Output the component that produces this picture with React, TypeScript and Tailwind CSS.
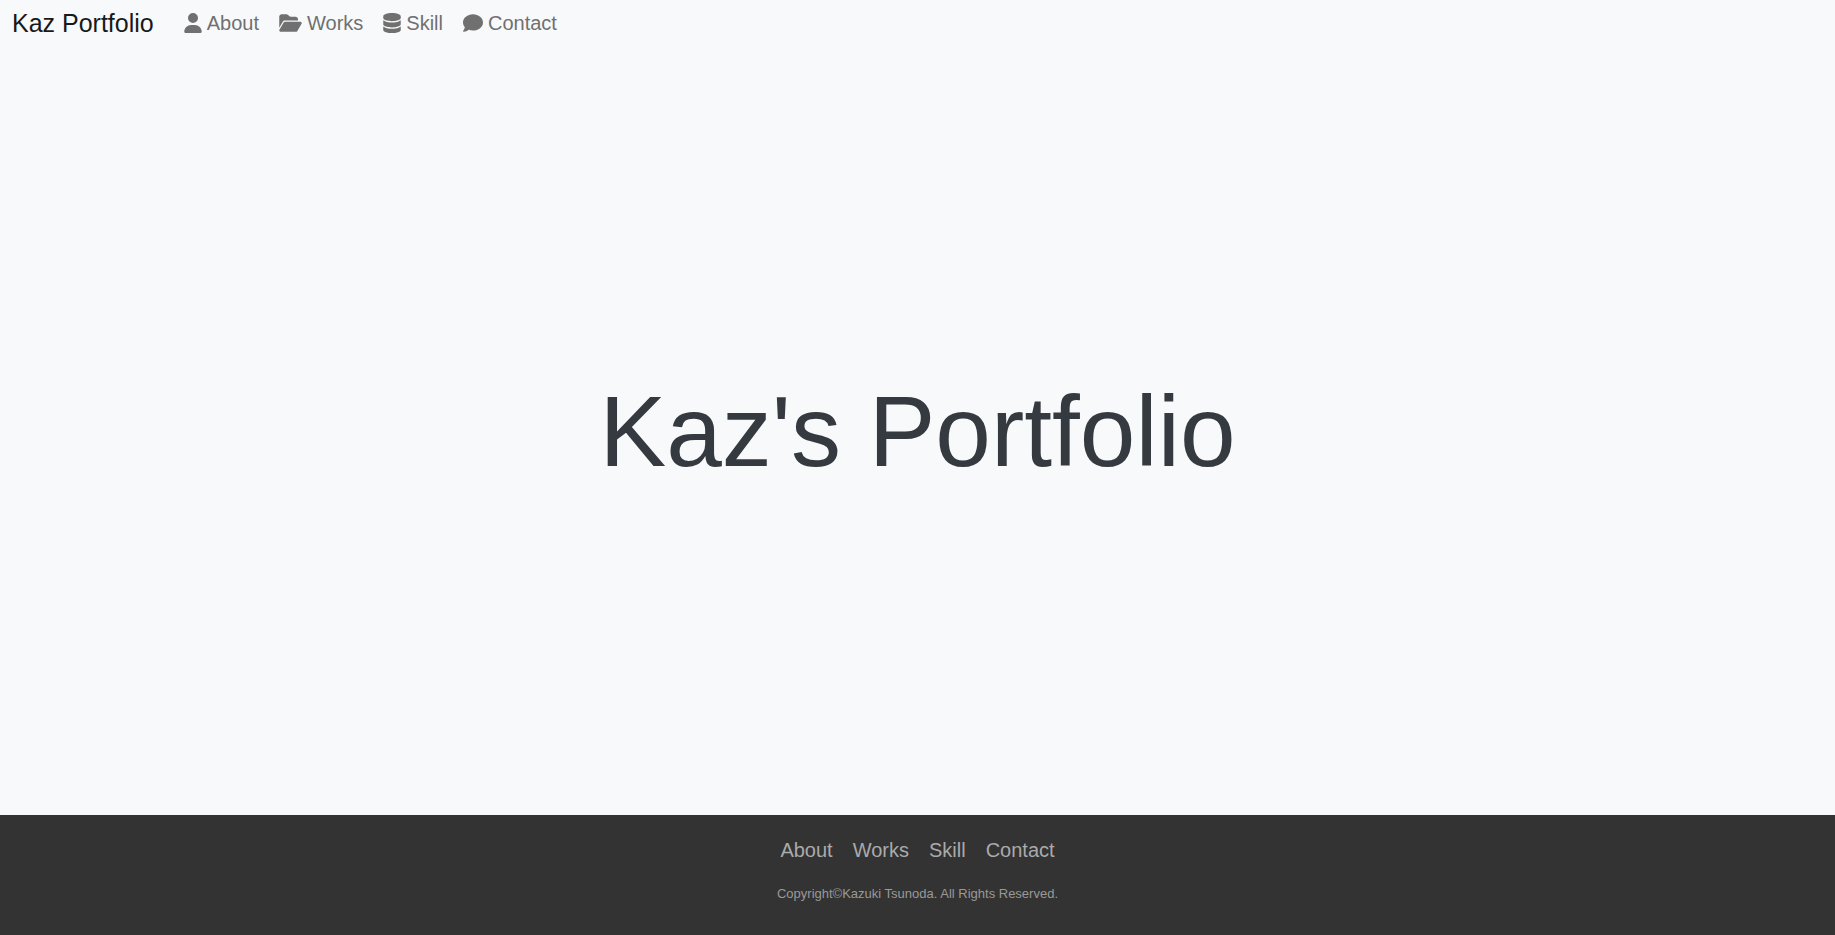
import { FaUser, FaFolderOpen, FaDatabase, FaComment } from "react-icons/fa6";

const links = [
  { label: "About", Icon: FaUser, iconClass: "h-5 w-[18px]" },
  { label: "Works", Icon: FaFolderOpen, iconClass: "h-5 w-[23px]" },
  { label: "Skill", Icon: FaDatabase, iconClass: "h-5 w-[18px]" },
  { label: "Contact", Icon: FaComment, iconClass: "h-5 w-5" },
];

export default function App() {
  return (
    <div className="flex min-h-screen flex-col bg-[#f8f9fb] font-['Liberation_Sans',Arial,sans-serif]">
      <header className="flex items-center px-3 py-1">
        <a href="#top" className="mr-5 text-[25px] leading-[38px] text-[#17191b]">
          Kaz Portfolio
        </a>
        <nav className="flex">
          {links.map(({ label, Icon, iconClass }) => (
            <a
              key={label}
              href={`#${label.toLowerCase()}`}
              className="flex items-center gap-[5px] px-2.5 text-xl leading-[38px] text-[#707070]"
            >
              <Icon className={iconClass} />
              {label}
            </a>
          ))}
        </nav>
      </header>
      <main className="flex grow items-center justify-center">
        <h1 className="text-[100px] leading-none text-[#343a40]">Kaz's Portfolio</h1>
      </main>
      <footer className="flex h-30 flex-col items-center bg-[#333] pt-5">
        <nav className="flex gap-5 text-xl leading-[30px] text-[#aaa]">
          {links.map(({ label }) => (
            <a key={label} href={`#${label.toLowerCase()}`}>
              {label}
            </a>
          ))}
        </nav>
        <p className="mt-[19px] text-[13px] leading-5 text-[#999]">
          Copyright©Kazuki Tsunoda. All Rights Reserved.
        </p>
      </footer>
    </div>
  );
}
